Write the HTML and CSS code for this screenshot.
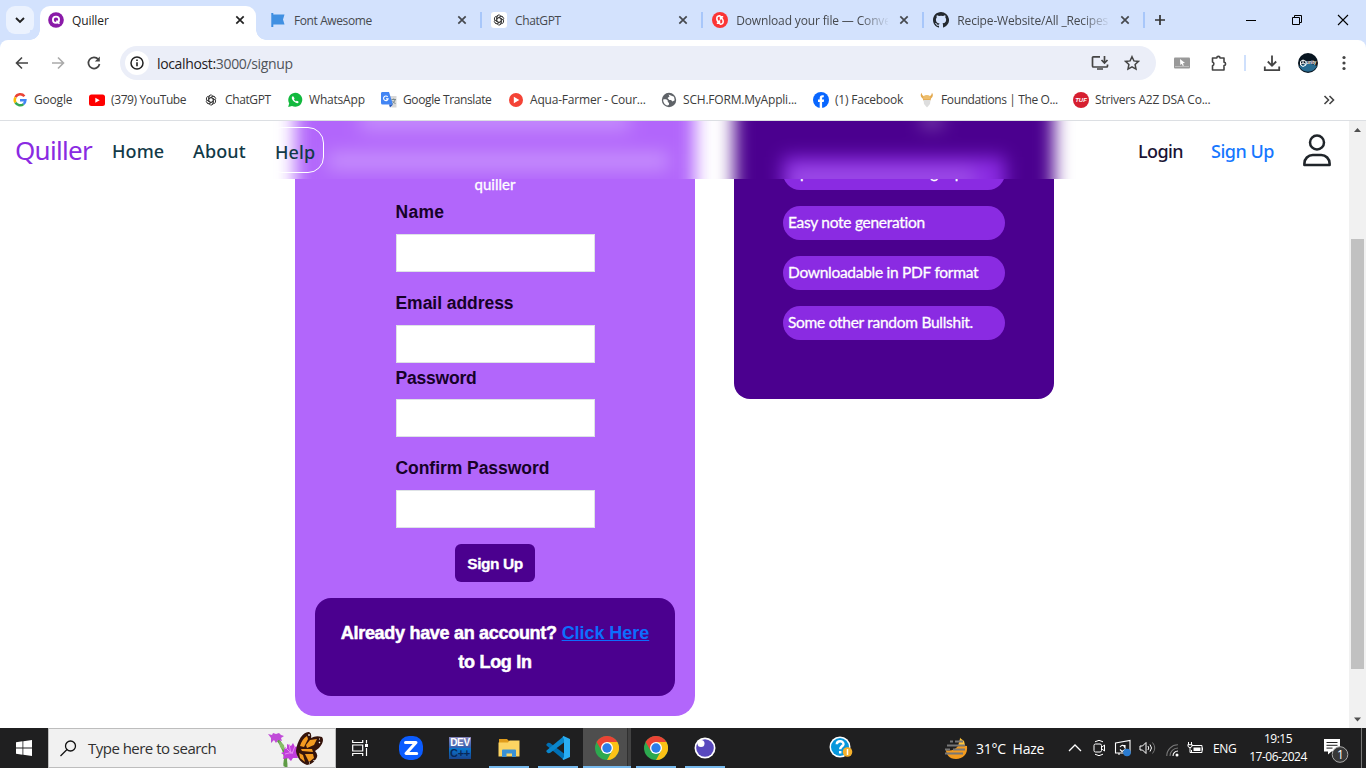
FILE: index.html
```html
<!DOCTYPE html>
<html lang="en">
<head>
<meta charset="utf-8">
<title>Quiller</title>
<link rel="stylesheet" href="styles.css">
</head>
<body>
<svg class="defs" width="0" height="0">
  <defs>
    <symbol id="close" viewBox="0 0 16 16"><path d="M4.3 4.3l7.4 7.4M11.7 4.3l-7.4 7.4" fill="none" stroke="currentColor" stroke-width="1.7"/></symbol>
    <symbol id="gpt" viewBox="0 0 16 16"><g fill="none" stroke="#333" stroke-width="1"><path id="petal" d="M5.4 9.6V4.4a2.7 2.7 0 0 1 5-1.3M5.4 6.2l4-2.3a2.7 2.7 0 0 1 3.5.6"/><use href="#petal" transform="rotate(60 8 8)"/><use href="#petal" transform="rotate(120 8 8)"/><use href="#petal" transform="rotate(180 8 8)"/><use href="#petal" transform="rotate(240 8 8)"/><use href="#petal" transform="rotate(300 8 8)"/></g></symbol>
    <symbol id="chrome" viewBox="0 0 24 24"><circle cx="12" cy="12" r="12" fill="#2da94f"/><path d="M22.4 6A12 12 0 0 1 12 24L17 15 12 6z" fill="#fbc116"/><path d="M1.6 6A12 12 0 0 1 22.4 6H12L6.800 15z" fill="#ea4335"/><circle cx="12" cy="12" r="6" fill="#fff"/><circle cx="12" cy="12" r="4.7" fill="#2b7de9"/></symbol>
  </defs>
</svg>

<header class="tabstrip">
  <div class="tab-search"><svg width="10" height="8" viewBox="0 0 10 8"><path d="M1 2l4 4 4-4" fill="none" stroke="#222" stroke-width="1.9"/></svg></div>
  <div class="tab active">
    <svg class="fav" viewBox="0 0 16 16"><circle cx="8" cy="8" r="7.8" fill="#8a1aa8"/><circle cx="8" cy="7.8" r="3.1" fill="none" stroke="#fff" stroke-width="1.8"/><path d="M8.4 8.6l3 3.2" stroke="#fff" stroke-width="1.6"/></svg>
    <span class="tab-title">Quiller</span><svg class="x"><use href="#close"/></svg>
  </div>
  <div class="tab">
    <svg class="fav" viewBox="0 0 16 16"><path d="M2.300 1v14" stroke="#3b8de0" stroke-width="2"/><path d="M2 2.500h12.500l-1.500 5 1.500 5H2z" fill="#4090e2"/></svg>
    <span class="tab-title narrow">Font Awesome</span><svg class="x"><use href="#close"/></svg>
  </div>
  <div class="tab">
    <svg class="fav white" viewBox="0 0 16 16"><use href="#gpt" x="1.500" y="1.500" width="13" height="13"/></svg>
    <span class="tab-title narrow">ChatGPT</span><svg class="x"><use href="#close"/></svg>
  </div>
  <div class="tab">
    <svg class="fav" viewBox="0 0 16 16"><circle cx="8" cy="8" r="8" fill="#fb3535"/><path d="M8.500 3.800C4 3.500 3.500 7.500 7.500 11.300V8.300M7.500 11.300H4.800M7.500 12.200c4.500.3 5-3.700 1-7.500v3M8.500 4.700h2.700" fill="none" stroke="#fff" stroke-width="1.500"/></svg>
    <span class="tab-title fade">Download your file — Conve</span><svg class="x"><use href="#close"/></svg>
  </div>
  <div class="tab">
    <svg class="fav" viewBox="0 0 16 16"><path fill="#24292f" d="M8 0C3.580 0 0 3.580 0 8c0 3.540 2.290 6.530 5.470 7.590.4.070.55-.17.55-.38v-1.500c-2.010.37-2.530-.49-2.690-.94-.09-.23-.48-.94-.82-1.130-.28-.15-.68-.52-.01-.53.63-.01 1.080.58 1.230.82.72 1.210 1.870.87 2.330.66.07-.52.28-.87.51-1.070-1.780-.2-3.640-.89-3.640-3.950 0-.87.31-1.590.82-2.150-.08-.2-.36-1.020.08-2.120 0 0 .67-.21 2.200.82a7.600 7.600 0 0 1 4 0c1.530-1.040 2.200-.82 2.200-.82.44 1.100.16 1.920.08 2.120.51.56.82 1.270.82 2.150 0 3.070-1.870 3.750-3.650 3.950.29.25.54.73.54 1.480v2.200c0 .21.15.46.55.38A8 8 0 0 0 8 0z"/></svg>
    <span class="tab-title fade">Recipe-Website/All _Recipes</span><svg class="x"><use href="#close"/></svg>
  </div>
  <svg class="plus" width="12" height="12" viewBox="0 0 12 12"><path d="M6 1v10M1 6h10" stroke="#333" stroke-width="1.700"/></svg>
  <div class="window-buttons">
    <svg width="12" height="12" viewBox="0 0 12 12"><path d="M1 6.500h10" stroke="#000"/></svg>
    <svg width="12" height="12" viewBox="0 0 12 12"><path d="M1.500 3.500h7v7h-7zM3.500 3.500v-2h7v7h-2" fill="none" stroke="#000"/></svg>
    <svg width="12" height="12" viewBox="0 0 12 12"><path d="M1 1l10 10M11 1L1 11" stroke="#000" stroke-width="1.100"/></svg>
  </div>
</header>

<div class="toolbar">
  <svg class="tb back" viewBox="0 0 16 16"><path d="M14 8H3M8 2.500L2.500 8 8 13.500" fill="none" stroke="#444" stroke-width="1.600"/></svg>
  <svg class="tb fwd" viewBox="0 0 16 16"><path d="M2 8h11M8 2.500L13.500 8 8 13.500" fill="none" stroke="#aaa" stroke-width="1.600"/></svg>
  <svg class="tb reload" viewBox="0 0 16 16"><path d="M13.500 9A5.600 5.600 0 1 1 12.300 4.300" fill="none" stroke="#444" stroke-width="1.700"/><path d="M13.800 1.500v5H8.800z" fill="#444"/></svg>
  <div class="omnibox">
    <span class="info"><svg width="14" height="14" viewBox="0 0 14 14"><circle cx="7" cy="7" r="6" fill="none" stroke="#222" stroke-width="1.500"/><path d="M7 6.200v4M7 3.600v1.500" stroke="#222" stroke-width="1.600"/></svg></span>
    <span class="url"><b>localhost:</b>3000/signup</span>
    <svg class="install" width="18" height="16" viewBox="0 0 18 16"><path d="M9 1.800H2.500A1 1 0 0 0 1.500 3v8a1 1 0 0 0 1 1h13a1 1 0 0 0 1-1V9.500M6 14h6M13.500 1v6.500M10.500 5l3 3 3-3" fill="none" stroke="#444" stroke-width="1.700"/></svg>
    <svg class="star" width="16" height="16" viewBox="0 0 16 16"><path d="M8 1.700l1.900 4.200 4.600.5-3.400 3.100.9 4.600L8 11.800l-4 2.300.9-4.600L1.500 6.400l4.600-.5z" fill="none" stroke="#444" stroke-width="1.500"/></svg>
  </div>
  <svg class="ext-cast" width="16" height="12" viewBox="0 0 16 12"><rect width="16" height="11" y=".5" rx="1" fill="#999"/><path d="M6 2l5 4-2.200.3 1 2.200-1 .4-1-2.100L6.300 8z" fill="#fff"/><path d="M1 9.500h14" stroke="#bbb"/></svg>
  <svg class="puzzle" width="18" height="18" viewBox="0 0 18 18"><path d="M2.500 4h4.300a1.500 1.500 0 1 1 3.200 0h4v4.300a1.500 1.500 0 1 1 0 3.200V16H2.500v-4.300a2 2 0 0 0 0-3.800z" fill="none" stroke="#444" stroke-width="1.600" stroke-linejoin="round"/></svg>
  <i class="divider"></i>
  <svg class="download" width="18" height="18" viewBox="0 0 18 18"><path d="M9 1.500v10M4.800 7.500L9 11.700l4.200-4.200M1.800 12.500v3.700h14.400v-3.700" fill="none" stroke="#444" stroke-width="1.800"/></svg>
  <div class="avatar"><svg width="20" height="20" viewBox="0 0 20 20"><circle cx="10" cy="10" r="10" fill="#081520"/><path d="M1 13q9-5 18 0a10 10 0 0 1-18 0" fill="#286b91"/><path d="M5 7l3 1.500v3.500L5 13.500 2.500 12V8.500zM5 7v3l3 1.500M5 10l-2.500 1.500" fill="none" stroke="#fff"/></svg><span>unity</span></div>
  <svg class="dots" width="4" height="16" viewBox="0 0 4 16"><g fill="#444"><circle cx="2" cy="2.500" r="1.600"/><circle cx="2" cy="8" r="1.600"/><circle cx="2" cy="13.500" r="1.600"/></g></svg>
</div>

<nav class="bookmarks">
  <span class="bm w1"><svg viewBox="0 0 16 16"><g fill="none" stroke-width="2.500"><path d="M12.400 4.300A5.300 5.300 0 0 0 3.500 5.300" stroke="#ea4335"/><path d="M3.500 5.300a5.300 5.300 0 0 0 0 5.400" stroke="#fbbc05"/><path d="M3.500 10.700a5.300 5.300 0 0 0 8 1.400" stroke="#34a853"/><path d="M11.500 12.100A5.300 5.300 0 0 0 13.400 8.200H8" stroke="#4285f4"/></g></svg><em>Google</em></span>
  <span class="bm w2"><svg viewBox="0 0 16 16"><rect y="2.500" width="16" height="11.500" rx="2.500" fill="#f00"/><path d="M6.300 5.700v5L10.700 8.200z" fill="#fff"/></svg><em class="narrow">(379) YouTube</em></span>
  <span class="bm w3"><svg viewBox="0 0 16 16"><use href="#gpt" x="1.500" y="1.500" width="13" height="13"/></svg><em class="narrow">ChatGPT</em></span>
  <span class="bm w4"><svg viewBox="0 0 16 16"><path d="M1.200 15l1-3.700A7 7 0 1 1 5 14z" fill="#12b93e"/><path d="M5.700 4.300c-2 1.300-.3 4 1.600 5.500s3.600 2 4.300.4c.2-.7-1.800-1.800-2.200-1.200s-.6.600-1.600-.4-.9-1.100-.4-1.600S6.300 4 5.700 4.300" fill="#fff"/></svg><em>WhatsApp</em></span>
  <span class="bm w5"><svg viewBox="0 0 16 16"><path d="M7 4h8.500v11.500h-5z" fill="#d8d8d8"/><path d="M1 0h7l4 12.500H1.500A1.500 1.500 0 0 1 0 11V1.500A1.500 1.500 0 0 1 1 0" fill="#4285f4"/><path d="M8 12.500h4l-3 3z" fill="#2455b8"/><path d="M6.700 4.900a2.300 2.300 0 1 0 .4 2H5" fill="none" stroke="#fff" stroke-width="1.100"/><path d="M10.500 7.500h4.500M12.700 6.500v1M14 8c-.5 2-2 3-2.500 3.500M11.500 9l3 3" stroke="#7b8a8d" fill="none"/></svg><em class="narrow">Google Translate</em></span>
  <span class="bm w6"><svg viewBox="0 0 16 16"><circle cx="8" cy="8" r="7" fill="#f44336"/><path d="M5.800 4.800v6.400L11.300 8z" fill="#fff"/></svg><em>Aqua-Farmer - Cour...</em></span>
  <span class="bm w7"><svg viewBox="0 0 16 16"><circle cx="8" cy="8" r="7.200" fill="#5f6368"/><path d="M2.200 7.500c1.800-.4 3.800-.2 4.500 1 .5 1-.5 1.200.5 1.700s1 1 .6 2.800l-1.500.5c-2.300-.5-4.300-3-4.100-6M7.500 2.400L13 4.800l.7 3.500-2.200 1.200-1.500-1.400L8.300 8 6.500 6l2-1.500z" fill="#fff"/></svg><em>SCH.FORM.MyAppli...</em></span>
  <span class="bm w8"><svg viewBox="0 0 16 16"><circle cx="8" cy="8" r="8" fill="#0866ff"/><path d="M6.700 16V10H5V7.500h1.700V6.300c0-2.500 1.200-3.500 4.100-3v2c-1.400-.1-1.700.2-1.700 1.300v.9h2L10.700 10H9.100v6z" fill="#fff"/></svg><em>(1) Facebook</em></span>
  <span class="bm w9"><svg viewBox="0 0 16 16"><path d="M2.500.8Q3 4 5 4.500h5.500Q12.500 4 13 .8l.8 1.500c.3 2.500-.8 3.500-1.800 4.200l-.5 2H4.300l-.6-2C2 5.500 1.500 4 1.800 2.300z" fill="#e3a94e"/><path d="M4.300 4.300Q8 1.800 11.300 4.300v3h-7z" fill="#edbd6b"/><path d="M4.500 8h7l-.5 4L8 15.500 5 12z" fill="#ddd"/></svg><em class="narrow">Foundations | The O...</em></span>
  <span class="bm w10"><span class="tuf">TUF</span><em>Strivers A2Z DSA Co...</em></span>
  <svg class="more" width="12" height="10" viewBox="0 0 12 10"><path d="M1.500 1l4 4-4 4M6.500 1l4 4-4 4" fill="none" stroke="#444" stroke-width="1.600"/></svg>
</nav>

<div class="viewport">
  <main class="page">
    <nav class="navbar">
      <div class="frost"></div>
      <a class="brand">Quiller</a><a class="link home">Home</a><a class="link about">About</a><a class="link help">Help</a>
      <span class="grow"></span>
      <a class="link login">Login</a><a class="link signup">Sign Up</a>
      <svg class="user" width="28" height="33" viewBox="0 0 28 33"><circle cx="14" cy="8.500" r="7" fill="none" stroke="#20252a" stroke-width="2.500"/><path d="M1.400 31V29.500A8.500 8.500 0 0 1 9.800 21h8.400a8.500 8.500 0 0 1 8.400 8.500V31z" fill="none" stroke="#20252a" stroke-width="2.600" stroke-linejoin="round"/></svg>
    </nav>
    <section class="form-card">
      <p class="intro">quiller</p>
      <form>
        <label class="name">Name</label><div class="field"></div>
        <label class="spaced">Email address</label><div class="field"></div>
        <label class="tight">Password</label><div class="field"></div>
        <label class="spaced">Confirm Password</label><div class="field"></div>
      </form>
      <button class="submit">Sign Up</button>
      <div class="login-box"><span>Already have an account?</span> <a>Click Here</a><br><span>to Log In</span></div>
    </section>
    <aside class="feature-card">
      <p>Open access before signup</p>
      <p>Easy note generation</p>
      <p>Downloadable in PDF format</p>
      <p>Some other random Bullshit.</p>
    </aside>
  </main>
  <div class="scrollbar">
    <svg width="17" height="17" viewBox="0 0 17 17"><path d="M5 11h7L8.500 7z" fill="#505050"/></svg>
    <div class="thumb"></div>
    <svg class="down" width="17" height="17" viewBox="0 0 17 17"><path d="M5 6.500h7l-3.500 4z" fill="#505050"/></svg>
  </div>
</div>

<footer class="taskbar">
  <div class="start"><svg width="16" height="16" viewBox="0 0 16 16"><path d="M0 2.200l6.500-.9v6.300H0zM7.300 1.200L16 0v7.600H7.300zM0 8.400h6.500v6.300L0 13.800zM7.300 8.400H16V16l-8.700-1.200z" fill="#fff"/></svg></div>
  <div class="search">
    <svg width="17" height="17" viewBox="0 0 17 17"><circle cx="10.500" cy="6" r="5" fill="none" stroke="#111" stroke-width="1.300"/><path d="M7 9.500l-6.500 6.500" stroke="#111" stroke-width="1.300"/></svg>
    <span>Type here to search</span>
    <svg class="butterfly" width="60" height="38" viewBox="0 0 60 38"><path d="M11 11q8 9 8 27M18 37q-1-8 5-14" fill="none" stroke="#5e9b45" stroke-width="3"/><path d="M12 12l5 4 1 6-5-4z" fill="#86bd67"/><path d="M1 5l4 1 1-2 3 1 3-1 2 2 3 1-3 2 1 3-4-1-2 3-2-3-3 3 0-5z" fill="#c04bd8"/><path d="M17 20l3-1 0-4 4 2 2-3 2 4 4-1-1 5 3 3-4 1 1 3-5 0-2 3-3-3-5 1 1-4-3-2 3-1z" fill="#c13edb"/><path d="M18 18l5 5M22 15l2 10M28 17l-3 8M18 25l8-2" stroke="#e58af0"/><g class="wings"><path d="M29 22C30 11 37 2 42 3q3 1 2 6 5-3 11-1 3 4-3 11l-4 3q4 4 1 8-4 6-9 6c-6-2-10-7-11-14z" fill="#35140b"/><path d="M33 17q2-7 7-10l1 3-4 8zM39 16l4-5 7-1-3 6-7 3zM34 20h11l1 3-11-1zM32 24l4 2 2 7-5-4zM38 25l8 0 1 4-5 4z" fill="#f39a20"/><path d="M42 5l0 2M52 10l1 0M52 13l1 1M47 31l0 1M42 34h1" stroke="#fff" stroke-width="1.200"/></g></svg>
  </div>
  <div class="task view"><svg width="17" height="16" viewBox="0 0 17 16"><path d="M.7 0v2.500h10V0M.7 16v-2.500h10V16M.7 5h10v6H.7zM14.500 0v3.500M14.500 8v8" fill="none" stroke="#fff" stroke-width="1.200"/><path d="M13 4h3v3h-3z" fill="#fff"/></svg></div>
  <div class="task z"><svg width="24" height="24" viewBox="0 0 24 24"><rect width="24" height="24" rx="10" fill="#0b5cff"/><path d="M6.500 6.500h10.500L7 17.500h10.700" fill="none" stroke="#fff" stroke-width="3" stroke-linejoin="round" stroke-linecap="round"/></svg></div>
  <div class="task dev"><span><b>DEV</b><i>C++</i></span></div>
  <div class="task run"><svg width="22" height="20" viewBox="0 0 22 20"><path d="M1 1h8l2 2h10v15H1z" fill="#e09c1b"/><path d="M.5 4.500h9.500l1.500-2h10V18.500H.5z" fill="#fcd462"/><path d="M4 19v-6.500a1 1 0 0 1 1-1h12a1 1 0 0 1 1 1V19h-4v-3.500H8.500V19z" fill="#3a91d4"/></svg></div>
  <div class="task run"><svg width="24" height="24" viewBox="0 0 24 24"><path d="M.4 8.300L2 6.800l2 .1L18 17.500V24L.5 9.500z" fill="#0070b5"/><path d="M.4 15.700L2 17.200l2-.1L18 6.500V0L.5 14.500z" fill="#0a86cc"/><path d="M17.500 0L24 3v18l-6.500 3-1-1 1.500-2V3l-1.500-2z" fill="#29adf3"/></svg></div>
  <div class="task run current"><svg width="24" height="24"><use href="#chrome"/></svg></div>
  <div class="task run"><svg width="24" height="24"><use href="#chrome"/></svg></div>
  <div class="task run"><svg width="22" height="22" viewBox="0 0 22 22"><circle cx="11" cy="11" r="10.500" fill="#fff"/><circle cx="11" cy="11" r="8.800" fill="#5849be"/><circle cx="7" cy="6.500" r="3.500" fill="#fff"/></svg></div>
  <span class="grow"></span>
  <svg class="help-icon" width="24" height="24" viewBox="0 0 24 24"><circle cx="11" cy="11" r="10.500" fill="#fff"/><circle cx="11" cy="11" r="9" fill="#0797dc"/><path d="M7.800 8.200c.2-4 7-3.600 6.600 0-.3 2-3.200 2.300-3.200 5M11.200 15v2.500" fill="none" stroke="#fff" stroke-width="2.500"/><circle cx="18.500" cy="16" r="4.800" fill="#f5b02b"/><path d="M18.500 13v6" stroke="#fff" stroke-width="1.500"/></svg>
  <svg class="haze" width="25" height="24" viewBox="0 0 25 24"><path d="M17 1c-2 6 0 9 6 9 1 8-4 13-11 13S2 18 2 14q7 2 12-4 1-5 3-9" fill="#f39b1f"/><path d="M16 2l4 3 1 4-6 1z" fill="#ffc43b"/><path d="M6 5.500h3M11 5.500h8M3 9.500h18M9 13.500h12M1 13.500h5M1 17.500h18" stroke="#777" stroke-width="1.900"/></svg>
  <span class="weather">31°C&nbsp; Haze</span>
  <svg class="chev" width="14" height="8" viewBox="0 0 14 8"><path d="M1 7l6-6 6 6" fill="none" stroke="#fff" stroke-width="1.300"/></svg>
  <svg class="meet" width="12" height="18" viewBox="0 0 12 18"><g fill="none" stroke="#fff"><rect x="1" y="5" width="7.500" height="8" rx="1.500"/><path d="M9 8l2.500-2v6L9 10M2 2.800q4-3 8 0M2 15.200q4 3 8 0"/></g></svg>
  <svg class="sync" width="18" height="18" viewBox="0 0 18 18"><path d="M1.500 4L16 1.500v12.500H1.500zM5 14v2M8 6.500h3v3M6 8q3-4 5 1M12 10l-4 2.500-2-2" fill="none" stroke="#fff" stroke-width="1.100"/><circle cx="13" cy="13.500" r="3.800" fill="#2a7bd0"/></svg>
  <svg class="sound" width="17" height="14" viewBox="0 0 17 14"><g fill="none" stroke="#fff"><path d="M1 5h2.500L7 1.500v11L3.500 9H1zM9 5q1.500 2 0 4M11 3.500q3 3.500 0 7"/><path d="M13.500 1.500q4.500 5.500 0 11" stroke="#777"/></g></svg>
  <svg class="wifi" width="13" height="13" viewBox="0 0 13 13"><g fill="none" stroke="#777" stroke-width="1.100"><path d="M.8 12A11 11 0 0 1 12 .8M4 12a8 8 0 0 1 8-8"/><path d="M7 12a5 5 0 0 1 5-5" stroke="#fff"/></g><circle cx="11" cy="11" r="1.500" fill="#fff"/></svg>
  <svg class="battery" width="17" height="12" viewBox="0 0 17 12"><path d="M5 3.500h10v7H4.500V8M15.500 5.500v3M1.500 0v3M4.500 0v3M.8 2.700h4.400q0 3-2.200 3T.8 2.700M3 5.500v5h2" fill="none" stroke="#fff"/><path d="M6.500 5.500h7v3.500h-7z" fill="#fff"/></svg>
  <span class="lang">ENG</span>
  <span class="clock"><span>19:15</span><span>17-06-2024</span></span>
  <div class="notice"><svg width="25" height="26" viewBox="0 0 25 26"><path d="M0 1h16v12.500H7.500L4 16.500v-3H0z" fill="#fff"/><path d="M2.500 4.500h11M2.500 7.300h11M2.500 10.100h6" stroke="#222"/><circle cx="16" cy="16.500" r="7.800" fill="#383838" stroke="#aaa"/></svg><b>1</b></div>
  <i class="peek"></i>
</footer>
</body>
</html>
```
FILE: styles.css
```css
* { box-sizing: border-box; }
body { margin: 0; width: 1366px; height: 768px; overflow: hidden; display: flex; flex-direction: column; background: #fff; font-family: "Open Sans", "Noto Sans", sans-serif; font-size: 12px; color: #3c3c3c; }
.defs { position: absolute; }
svg { display: block; flex: none; }
p { margin: 0; }
.grow { flex: 1; }

.tabstrip { height: 40px; flex: none; display: flex; background: #d3e2fd; }
.tab-search { width: 28px; height: 28px; margin: 6px 6px 0; border-radius: 9px; background: #ebf2fe; display: flex; align-items: center; justify-content: center; }
.tab { position: relative; width: 221.1px; flex: none; height: 34px; margin-top: 6px; padding: 0 14px 6px 14px; display: flex; align-items: center; color: #46494e; }
.tab.active { width: 216px; padding-left: 8px; padding-right: 8px; background: #fff; border-radius: 10px 10px 0 0; color: #222; }
.tab.active::before, .tab.active::after { content: ""; position: absolute; bottom: 0; width: 10px; height: 10px; }
.tab.active::before { left: -10px; background: radial-gradient(circle at 0 0, #d3e2fd 9.5px, #fff 10px); }
.tab.active::after { right: -10px; background: radial-gradient(circle at 100% 0, #d3e2fd 9.5px, #fff 10px); }
.tab:not(.active)::after { content: ""; position: absolute; right: -4.5px; top: 6px; width: 2px; height: 16px; background: #a8c7fa; }
.fav { width: 16px; height: 16px; }
.fav.white { background: #fff; border-radius: 3px; }
.tab-title { flex: none; width: 152px; margin-left: 8px; padding-top: 1px; white-space: nowrap; font-size: 12px; letter-spacing: -.1px; line-height: 20px; }
.tab-title.narrow { letter-spacing: -.4px; }
.fade { letter-spacing: -.15px; mask-image: linear-gradient(90deg, #000 124px, transparent 154px); -webkit-mask-image: linear-gradient(90deg, #000 124px, transparent 154px); }
.x { width: 16px; height: 16px; margin-left: 8px; flex: none; }
.plus { margin: 14px 0 0 14px; }
.window-buttons { display: flex; gap: 34px; margin: 14px 17px 0 auto; }

.toolbar { height: 46px; flex: none; display: flex; align-items: center; background: #fff; border-radius: 8px 8px 0 0; box-shadow: 0 -8px 0 0 #d3e2fd; position: relative; z-index: -1; }
.tb { width: 16px; height: 16px; }
.back { margin-left: 14px; }
.fwd { margin-left: 20px; }
.reload { margin-left: 20px; }
.omnibox { width: 1036px; height: 34px; margin-left: 18px; border-radius: 17px; background: #ebeef8; display: flex; align-items: center; flex: none; }
.info { width: 24px; height: 24px; margin-left: 5px; border-radius: 50%; background: #fff; display: flex; align-items: center; justify-content: center; }
.url { margin-left: 8px; font-size: 14px; letter-spacing: -.35px; color: #50545a; flex: 1; }
.url b { font-weight: 400; color: #1f2023; }
.install { margin-right: 15px; }
.star { margin-right: 16px; }
.ext-cast { margin-left: 18px; }
.puzzle { margin-left: 20px; }
.divider { width: 2px; height: 16px; background: #cfe0fc; margin-left: 16px; }
.download { margin-left: 17px; }
.avatar { position: relative; margin-left: 17px; }
.avatar span { position: absolute; left: 8px; top: 6px; font: bold 4.5px/8px "Liberation Sans", sans-serif; letter-spacing: -.1px; color: #fff; }
.dots { margin-left: 24px; }

.bookmarks { height: 35px; flex: none; display: flex; align-items: center; padding: 0 31px 7px 12px; border-bottom: 1px solid #dcdfe3; }
.bm { display: flex; align-items: center; flex: none; white-space: nowrap; }
.bm svg { width: 16px; height: 16px; }
.bm em { font-style: normal; margin-left: 6px; letter-spacing: -.2px; line-height: 20px; }
.bm em.narrow { letter-spacing: -.38px; }
.w1 { width: 77px; }
.w2 { width: 114px; }
.w3 { width: 84px; }
.w4 { width: 94px; }
.w5 { width: 127px; }
.w6 { width: 153px; }
.w7 { width: 152px; }
.w8 { width: 106px; }
.w9 { width: 154px; }
.tuf { width: 16px; height: 16px; border-radius: 50%; background: #d61f30; color: #fff; font: italic bold 6px/16px "Liberation Sans", sans-serif; text-align: center; }
.more { margin-left: auto; }

.viewport { flex: none; height: 607px; display: flex; }
.page { position: relative; width: 1349px; height: 607px; overflow: hidden; padding-left: 295px; display: flex; align-items: flex-start; gap: 39px; background: #fff; }
.navbar { position: absolute; z-index: 2; left: 0; top: 0; width: 1349px; height: 58px; overflow: hidden; display: flex; align-items: center; background: #fff; font-family: "Noto Sans", sans-serif; }
/* Frosted layer: soft copies of the cards that scroll under the bar. */
.frost {
  position: absolute; z-index: -1; left: 0; top: -50px; width: 1349px; height: 158px; filter: blur(9px);
  background:
    linear-gradient(rgba(255,255,255,.25), rgba(255,255,255,.25)) 360px 38px / 270px 22px no-repeat,
    linear-gradient(rgba(255,255,255,.3), rgba(255,255,255,.3)) 328px 82px / 340px 16px no-repeat,
    linear-gradient(rgba(255,255,255,.3), rgba(255,255,255,.3)) 922px 42px / 20px 14px no-repeat,
    linear-gradient(rgba(255,255,255,.16), rgba(255,255,255,.16)) 790px 97px / 185px 20px no-repeat,
    linear-gradient(#8a2be2, #8a2be2) 783px 86px / 222px 50px no-repeat,
    linear-gradient(#b266fb, #b266fb) 295px 0 / 400px 158px no-repeat,
    linear-gradient(#4b008f, #4b008f) 734px 0 / 320px 158px no-repeat;
}
.brand { width: 76px; margin-left: 15px; font-size: 26px; letter-spacing: -.7px; color: #8a2be2; white-space: nowrap; }
.link { font-size: 18px; font-weight: 500; color: #123a48; white-space: nowrap; padding-top: 2px; }
.home { margin-left: 21px; width: 81px; letter-spacing: .1px; }
.about { width: 73px; letter-spacing: .1px; }
.help { width: 58px; height: 46px; padding: 1px 0 0 8px; border: 1px solid #fff; border-radius: 16px; line-height: 46px; letter-spacing: .1px; }
.login { color: #1b1435; width: 73px; letter-spacing: -.6px; padding-top: 1px; }
.signup { color: #1677ff; width: 92px; letter-spacing: -.5px; padding-top: 1px; }
.user { margin-right: 18px; }

.form-card { width: 400px; height: 595px; background: #b266fb; border-radius: 0 0 20px 20px; display: flex; flex-direction: column; align-items: center; padding-top: 51px; }
.intro { height: 26px; line-height: 25px; color: #fff; font-family: Lato, sans-serif; font-size: 15px; -webkit-text-stroke: .3px #fff; }
form { width: 199px; display: block; }
label { display: block; height: 36px; font: bold 17.5px/28px "Liberation Sans", Arial, sans-serif; letter-spacing: -.05px; color: #170228; white-space: nowrap; }
label.name { letter-spacing: .3px; }
label.tight { padding-top: 1px; letter-spacing: -.2px; }
label.spaced { margin-top: 17px; }
.field { height: 38px; background: #fff; border: 1px solid #dee2e6; }
.submit { margin: 16px 0; width: 80px; height: 38px; flex: none; padding: 2px 0 0; border: 0; border-radius: 6px; background: #4b008f; color: #fff; font: bold 15.5px "Liberation Sans", Arial, sans-serif; letter-spacing: -.45px; -webkit-text-stroke: .3px #fff; }
.login-box { width: 360px; height: 98px; padding-top: 21px; border-radius: 16px; background: #4b008f; color: #fff; text-align: center; font: bold 18px/29px "Liberation Sans", Arial, sans-serif; letter-spacing: -.05px; flex: none; }
.login-box span { -webkit-text-stroke: .5px #fff; letter-spacing: -.3px; }
.login-box a { color: #0d6efd; text-decoration: underline; }
.feature-card { width: 320px; height: 278px; background: #4b008f; border-radius: 0 0 16px 16px; padding-top: 35px; display: flex; flex-direction: column; align-items: center; gap: 16px; }
.feature-card p { width: 222px; height: 34px; flex: none; border-radius: 17px; background: #8a2be2; color: #fff; padding-left: 5px; font: 15.5px/33px Lato, sans-serif; letter-spacing: -.28px; -webkit-text-stroke: .3px #fff; white-space: nowrap; }

.scrollbar { width: 17px; background: #f1f1f1; display: flex; flex-direction: column; }
.thumb { height: 430px; width: 13px; margin: 101px 0 0 2px; background: #c1c1c1; }
.down { margin-top: auto; }

.taskbar { height: 40px; flex: none; background: #1f1f20; display: flex; align-items: center; color: #fff; }
.start { width: 48px; padding-left: 16px; }
.search { width: 288px; height: 40px; border: 1px solid #bdbdbd; background: #f1f1f1; color: #303030; display: flex; align-items: center; padding-left: 11px; font-size: 15px; letter-spacing: -.52px; }
.search span { margin-left: 11px; flex: 1; white-space: nowrap; }
.butterfly { margin-right: 8px; }
.task { width: 40px; height: 40px; margin-right: 9px; display: flex; align-items: center; justify-content: center; flex: none; }
.task.view { width: 48px; margin-right: 7px; }
.task.run { border-bottom: 2px solid #76b9ed; padding-top: 2px; }
.task.current { width: 48px; margin-left: -4px; margin-right: 5px; background: linear-gradient(90deg, #4e4e4e 44px, #303030 44px, #303030 45px, #424242 45px); }
.dev span { width: 22px; height: 22px; display: flex; flex-direction: column; background: linear-gradient(#8584ba, #315eaf 50%, #0878d0 52%, #1a458f); font: bold 10px/11px "Liberation Sans", sans-serif; letter-spacing: -.3px; text-align: center; }
.dev b { color: #fff; }
.dev i { font-style: normal; color: #082858; font-size: 11px; }
.help-icon { margin-right: 91px; }
.weather { width: 92px; margin-left: 7px; font-size: 14px; letter-spacing: -.25px; white-space: nowrap; }
.chev { margin-right: 11px; }
.meet { margin-right: 9px; }
.sync { margin-right: 7px; }
.sound { margin-right: 10px; }
.wifi { margin: 4px 8px 0 0; }
.battery { margin-right: 9px; }
.lang { width: 35px; letter-spacing: -.3px; white-space: nowrap; }
.clock { width: 60px; display: flex; flex-direction: column; align-items: center; line-height: 18px; letter-spacing: -.5px; white-space: nowrap; }
.notice { position: relative; width: 25px; margin: 6px 0 0 16px; }
.notice b { position: absolute; left: 13px; top: 9px; font-weight: 400; line-height: 15px; }
.peek { width: 1px; height: 40px; background: #777; margin: 0 4px 0 12px; }
```
